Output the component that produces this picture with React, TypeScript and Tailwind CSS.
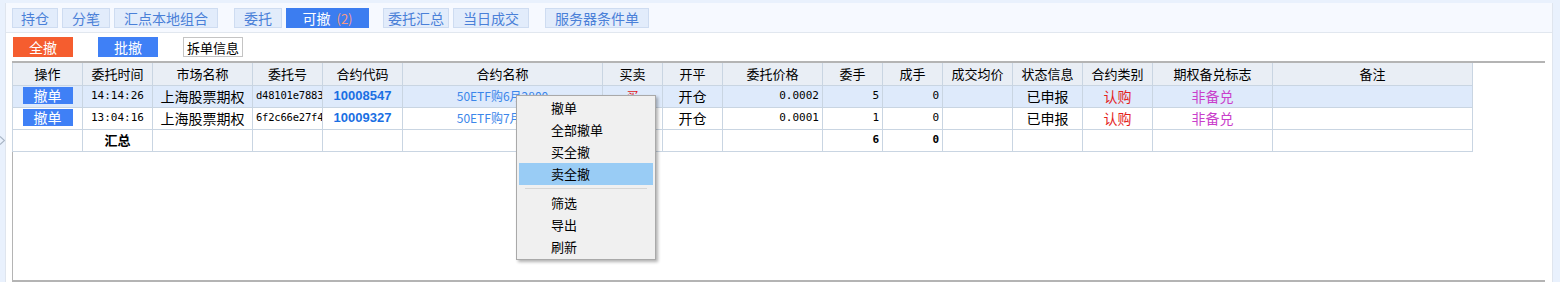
import React from 'react'

type Row = {
  time: string
  market: string
  orderId: string
  code: string
  name: string
  side: string
  openClose: string
  price: string
  qty: string
  filled: string
  avg: string
  status: string
  kind: string
  cover: string
  note: string
}

const columns = [
  { title: '操作', w: 70 },
  { title: '委托时间', w: 70 },
  { title: '市场名称', w: 100 },
  { title: '委托号', w: 70 },
  { title: '合约代码', w: 80 },
  { title: '合约名称', w: 200 },
  { title: '买卖', w: 60 },
  { title: '开平', w: 60 },
  { title: '委托价格', w: 100 },
  { title: '委手', w: 60 },
  { title: '成手', w: 60 },
  { title: '成交均价', w: 70 },
  { title: '状态信息', w: 70 },
  { title: '合约类别', w: 70 },
  { title: '期权备兑标志', w: 120 },
  { title: '备注', w: 200 },
]

const rows: Row[] = [
  {
    time: '14:14:26',
    market: '上海股票期权',
    orderId: 'd48101e7883',
    code: '10008547',
    name: '50ETF购6月2800',
    side: '买',
    openClose: '开仓',
    price: '0.0002',
    qty: '5',
    filled: '0',
    avg: '',
    status: '已申报',
    kind: '认购',
    cover: '非备兑',
    note: '',
  },
  {
    time: '13:04:16',
    market: '上海股票期权',
    orderId: '6f2c66e27f4',
    code: '10009327',
    name: '50ETF购7月2800',
    side: '买',
    openClose: '开仓',
    price: '0.0001',
    qty: '1',
    filled: '0',
    avg: '',
    status: '已申报',
    kind: '认购',
    cover: '非备兑',
    note: '',
  },
]

const tabs = [
  { label: '持仓', w: 'w-[46px]', ml: '' },
  { label: '分笔', w: 'w-[48px]', ml: 'ml-[4px]' },
  { label: '汇点本地组合', w: 'w-[104px]', ml: 'ml-[4px]' },
  { label: '委托', w: 'w-[48px]', ml: 'ml-[16px]' },
  { label: '可撤', w: 'w-[83px]', ml: 'ml-[4px]', active: true },
  { label: '委托汇总', w: 'w-[66px]', ml: 'ml-[14px]' },
  { label: '当日成交', w: 'w-[76px]', ml: 'ml-[4px]' },
  { label: '服务器条件单', w: 'w-[104px]', ml: 'ml-[16px]' },
]

const menuItems = ['撤单', '全部撤单', '买全撤', '卖全撤']
const menuItems2 = ['筛选', '导出', '刷新']

const cell = 'border border-[#c9d5e2] h-[22px] px-[3px] overflow-hidden whitespace-nowrap'
const mono = "font-['DejaVu_Sans_Mono',monospace] text-[11px]"

export default function App() {
  return (
    <div className="relative flex h-[282px] w-[1560px] bg-[#e9f1fd] pt-[3px] pl-[5px] pr-[6px] overflow-hidden font-['Noto_Sans_CJK_SC',sans-serif] text-[12px] text-black">
      {/* left collapse arrow */}
      <svg className="absolute left-0 top-[136px]" width="5" height="9" viewBox="0 0 5 9">
        <path d="M0 0.5 L4.5 4.5 L0 8.5" fill="none" stroke="#a8b4c4" strokeWidth="1.2" />
      </svg>

      <div className="flex flex-1 flex-col bg-white border-l border-r border-[#dfe5ee]">
        {/* tab bar */}
        <div className="flex h-[30px] shrink-0 items-start bg-[#f6f9ff] border-b border-[#e1e7ef] pt-[5px] pl-[6px]">
          {tabs.map((t) =>
            t.active ? (
              <div
                key={t.label}
                className={`${t.w} ${t.ml} flex h-[20px] items-center justify-center bg-[#3c7df0] text-[14px] leading-none text-white`}
              >
                可撤<span className="ml-[6px] text-[13px] text-[#f59a86]">(2)</span>
              </div>
            ) : (
              <div
                key={t.label}
                className={`${t.w} ${t.ml} flex h-[20px] items-center justify-center bg-[#e2ecfb] border border-[#cedcf1] text-[14px] leading-none text-[#4a80d8]`}
              >
                {t.label}
              </div>
            )
          )}
        </div>

        {/* action buttons */}
        <div className="flex h-[28px] shrink-0 items-start pt-[4px] pl-[7px]">
          <button className="flex h-[20px] w-[60px] items-center justify-center bg-[#f55d2f] text-[14px] leading-none text-white">
            全撤
          </button>
          <button className="ml-[25px] flex h-[20px] w-[60px] items-center justify-center bg-[#3f80f6] text-[14px] leading-none text-white">
            批撤
          </button>
          <button className="ml-[25px] flex h-[20px] w-[60px] items-center justify-center bg-white border border-[#c4c4c4] text-[13px] leading-none text-black">
            拆单信息
          </button>
        </div>

        {/* table frame */}
        <div className="ml-[6px] mr-[7px] flex-1 border-t-2 border-l border-b-2 border-[#b4b4b4]">
          <table className="table-fixed border-collapse w-[1460px] -ml-[1px]">
            <colgroup>
              {columns.map((c) => (
                <col key={c.title} style={{ width: c.w }} />
              ))}
            </colgroup>
            <thead>
              <tr className="bg-[#e9eef5]">
                {columns.map((c) => (
                  <th key={c.title} className={`${cell} border-t-0 font-normal text-center text-[13px]`}>
                    {c.title}
                  </th>
                ))}
              </tr>
            </thead>
            <tbody>
              {rows.map((r, i) => (
                <tr key={r.orderId} className={i === 0 ? 'bg-[#deeafb]' : 'bg-white'}>
                  <td className={`${cell} text-center`}>
                    <span className="inline-flex h-[17px] w-[50px] items-center justify-center bg-[#3f80f6] text-[14px] leading-none text-white">
                      撤单
                    </span>
                  </td>
                  <td className={`${cell} text-center ${mono}`}>{r.time}</td>
                  <td className={`${cell} text-center text-[14px]`}>{r.market}</td>
                  <td className={`${cell} text-center font-['DejaVu_Sans_Mono',monospace] text-[10.5px] tracking-[-0.2px] px-0`}>
                    {r.orderId}
                  </td>
                  <td className={`${cell} text-center font-['Liberation_Sans',sans-serif] text-[13px] font-bold text-[#1a6fe3]`}>
                    {r.code}
                  </td>
                  <td className={`${cell} text-center text-[#3b86ea]`}>{r.name}</td>
                  <td className={`${cell} text-center text-[#e01818]`}>{r.side}</td>
                  <td className={`${cell} text-center text-[14px]`}>{r.openClose}</td>
                  <td className={`${cell} text-right ${mono}`}>{r.price}</td>
                  <td className={`${cell} text-right ${mono}`}>{r.qty}</td>
                  <td className={`${cell} text-right ${mono}`}>{r.filled}</td>
                  <td className={`${cell} text-center`}>{r.avg}</td>
                  <td className={`${cell} text-center text-[14px]`}>{r.status}</td>
                  <td className={`${cell} text-center text-[14px] text-[#e41e1e]`}>{r.kind}</td>
                  <td className={`${cell} text-center text-[14px] text-[#c93fcb]`}>{r.cover}</td>
                  <td className={`${cell}`}>{r.note}</td>
                </tr>
              ))}
              <tr className="bg-white">
                <td className={cell}></td>
                <td className={`${cell} text-center font-bold text-[13px]`}>汇总</td>
                <td className={cell}></td>
                <td className={cell}></td>
                <td className={cell}></td>
                <td className={cell}></td>
                <td className={cell}></td>
                <td className={cell}></td>
                <td className={cell}></td>
                <td className={`${cell} text-right font-bold ${mono}`}>6</td>
                <td className={`${cell} text-right font-bold ${mono}`}>0</td>
                <td className={cell}></td>
                <td className={cell}></td>
                <td className={cell}></td>
                <td className={cell}></td>
                <td className={cell}></td>
              </tr>
            </tbody>
          </table>
        </div>
      </div>

      <div className="w-[1px]" />

      {/* context menu */}
      <div className="absolute left-[516px] top-[95px] w-[140px] bg-[#f0f0f0] border border-[#a9a9a9] shadow-[2px_2px_3px_rgba(0,0,0,0.3)] py-[1px] px-[2px]">
        {menuItems.map((m, i) => (
          <div
            key={m}
            className={`flex h-[22px] items-center pl-[32px] text-[13px] ${i === 3 ? 'bg-[#99ccf5]' : ''}`}
          >
            {m}
          </div>
        ))}
        <div className="mx-[6px] my-[3px] h-px bg-[#d6d6d6]" />
        {menuItems2.map((m) => (
          <div key={m} className="flex h-[22px] items-center pl-[32px] text-[13px]">
            {m}
          </div>
        ))}
      </div>
    </div>
  )
}
